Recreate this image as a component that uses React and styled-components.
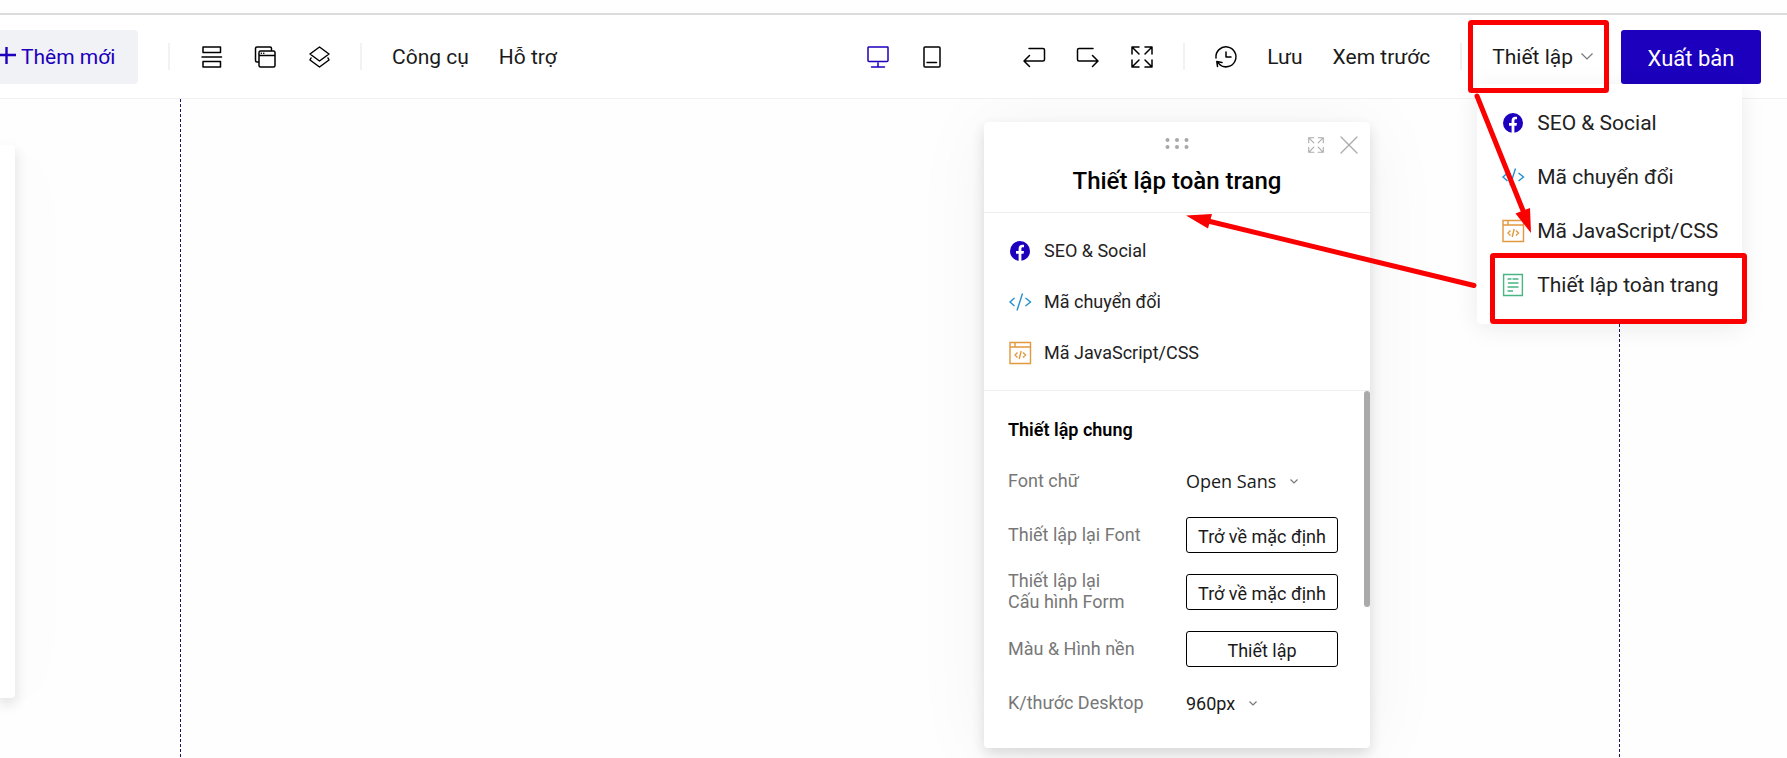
import React from "react";
import styled, { createGlobalStyle } from "styled-components";

const BLUE = "#1c00bd";
const RED = "#fb0000";

const GlobalStyle = createGlobalStyle`
  *, *::before, *::after { box-sizing: border-box; }
  body { margin: 0; background: #fefefe; color: #1a1a1a; font-family: Roboto, "Liberation Sans", sans-serif; }
  button, select { font: inherit; color: inherit; background: none; border: 0; padding: 0; cursor: pointer; }
  h2, h3, ul { margin: 0; padding: 0; }
`;

const Page = styled.div`
  position: relative;
  display: flex;
  flex-direction: column;
  min-height: 100vh;
  overflow: hidden;
`;

const Toolbar = styled.header`
  position: relative;
  z-index: 2;
  display: flex;
  align-items: center;
  margin-top: 13px;
  padding-right: 26px;
  border-top: 2px solid #dcdcdc;
  border-bottom: 1px solid #f0f0f0;
  background: #fff;
  box-sizing: content-box;
  height: 83px;
  font-size: 21px;
  line-height: 24px;
`;

const Group = styled.div`
  display: flex;
  align-items: center;
  gap: ${(p) => p.$gap}px;
`;

const Spacer = styled.div`
  flex: 1;
`;

const AddButton = styled.button`
  display: flex;
  align-items: center;
  gap: 5px;
  width: 138px;
  height: 54px;
  border-radius: 0 4px 4px 0;
  background: #f1f2f5;
  color: ${BLUE};
  white-space: nowrap;
`;

const IconButton = styled.button`
  display: flex;
  width: 22px;
  height: 22px;
  color: ${(p) => (p.$active ? BLUE : "#000")};
`;

const TextButton = styled.button`
  white-space: nowrap;
`;

const Divider = styled.span`
  width: 2px;
  height: 27px;
  margin: 0 30px;
  background: #f2f2f2;
`;

const Devices = styled(Group)`
  margin-right: 80px;
`;

const Settings = styled.div`
  position: relative;
  display: flex;
  align-items: center;
  height: 54px;
  margin-right: 28px;
`;

const SettingsButton = styled(TextButton)`
  display: flex;
  align-items: center;
  gap: 8px;
`;

const PublishButton = styled.button`
  width: 140px;
  height: 54px;
  padding-top: 4px;
  border-radius: 3px;
  background: ${BLUE};
  color: #fff;
  font-size: 22px;
`;

const Menu = styled.ul`
  position: absolute;
  top: 100%;
  left: -15px;
  width: 265px;
  padding: 12px 0;
  list-style: none;
  border-radius: 4px;
  background: #fff;
  box-shadow: 0 4px 24px rgba(0, 0, 0, 0.08);
`;

const MenuItem = styled.button`
  display: flex;
  align-items: center;
  gap: 14px;
  width: 100%;
  height: ${(p) => (p.$compact ? 51 : 54)}px;
  padding-left: 26px;
  font-size: ${(p) => (p.$compact ? 18 : 21)}px;
  white-space: nowrap;
  color: #222;
`;

const Canvas = styled.main`
  position: relative;
  flex: 1;
  display: flex;
  padding: 0 167px 0 180px;
`;

const PageArea = styled.section`
  flex: 1;
  display: flex;
  justify-content: space-between;
`;

const Guide = styled.div`
  width: 1px;
  background: repeating-linear-gradient(#22105f 0 3px, transparent 3px 5px);
`;

const floatShadow = "0 6px 14px rgba(0, 0, 0, 0.13), 0 4px 80px rgba(0, 0, 0, 0.05)";

const SidePanel = styled.aside`
  position: absolute;
  left: 0;
  top: 46px;
  width: 15px;
  height: 553px;
  border-radius: 0 4px 4px 0;
  background: #fff;
  box-shadow: ${floatShadow};
`;

const Panel = styled.aside`
  position: absolute;
  top: 23px;
  right: 417px;
  width: 386px;
  border-radius: 4px;
  background: #fff;
  box-shadow: ${floatShadow};
  font-size: 18px;
`;

const PanelHeader = styled.div`
  display: grid;
  grid-template-columns: 1fr auto 1fr;
  grid-template-rows: 28px 32px;
  padding: 15px 13px 0;
  height: 91px;
  border-bottom: 1px solid #eee;
`;

const DragHandle = styled.svg`
  grid-column: 2;
`;

const PanelActions = styled.div`
  display: flex;
  justify-content: flex-end;
  gap: 17px;
  color: #aaa;
`;

const SmallButton = styled.button`
  display: flex;
  width: 16px;
  height: 16px;
`;

const PanelTitle = styled.h2`
  grid-column: 1 / -1;
  font-size: 24px;
  font-weight: 500;
  line-height: 32px;
  text-align: center;
  color: #000;
`;

const PanelLinks = styled.ul`
  padding: 12px 0;
  list-style: none;
  border-bottom: 1px solid #eee;
`;

const PanelBody = styled.div`
  position: relative;
  display: flex;
  flex-direction: column;
  gap: 21px;
  padding: 28px 32px 30px 24px;
`;

const ScrollThumb = styled.span`
  position: absolute;
  top: 0;
  right: 0;
  width: 6px;
  height: 216px;
  border-radius: 3px;
  background: #aaa;
`;

const SectionTitle = styled.h3`
  padding-bottom: 4px;
  font-size: 18px;
  font-weight: 600;
  line-height: 22px;
  color: #000;
`;

const Row = styled.div`
  display: grid;
  grid-template-columns: 178px 1fr;
  align-items: center;
  align-content: center;
  height: ${(p) => (p.$tall ? 36 : 30)}px;
`;

const Label = styled.label`
  padding-bottom: 2px;
  line-height: 21px;
  color: #777;
  white-space: pre-line;
`;

const OutlineButton = styled.button`
  height: 36px;
  padding-top: 3px;
  border: 1px solid #000;
  border-radius: 3px;
  white-space: nowrap;
`;

const SelectBox = styled.span`
  display: flex;
  align-items: center;
  gap: 14px;
`;

const Select = styled.select`
  appearance: none;
  field-sizing: content;
  outline: none;
  font-family: ${(p) => p.$font || "inherit"};
`;

const Annotations = styled.svg`
  position: absolute;
  z-index: 3;
  top: 0;
  right: 0;
  pointer-events: none;
`;

function Icon({ size = 22, width = 1.5, children }) {
  return (
    <svg width={size} height={size} viewBox="0 0 22 22" fill="none" stroke="currentColor" strokeWidth={width} strokeLinecap="round" strokeLinejoin="round" overflow="visible" aria-hidden="true">
      {children}
    </svg>
  );
}

const expandPath = "M1 8V1H8M1 1L8 8M14 1H21V8M21 1L14 8M1 14V21H8M1 21L8 14M14 21H21V14M21 21L14 14";

const Chevron = ({ w, h }) => (
  <svg width={w} height={h} viewBox={`0 0 ${w} ${h}`} fill="none" stroke="#777" strokeWidth="1.2" aria-hidden="true">
    <path d={`M.5 .5L${w / 2} ${h - 1}L${w - 0.5} .5`} />
  </svg>
);

const FacebookIcon = () => (
  <svg width="20" height="20" viewBox="0 0 20 20" aria-hidden="true">
    <circle cx="10" cy="10" r="10" fill={BLUE} />
    <path fill="#fff" d="M8.6 20V12.8H6V10H8.6V7.8C8.6 5.2 10.1 3.8 12.4 3.8C13.2 3.8 14 3.9 14 3.9V6.3H12.8C11.7 6.3 11.4 7 11.4 7.8V10H14L13.5 12.8H11.4V20Z" />
  </svg>
);

const CodeIcon = () => (
  <svg width="20" height="20" viewBox="0 0 20 20" fill="none" stroke="#2490d0" strokeWidth="1.4" overflow="visible" aria-hidden="true">
    <path d="M4.5 6L0 10L4.5 14M15.500 6L20.500 10L15.500 14M12.500 1.500L7 18.500" />
  </svg>
);

const ScriptIcon = () => (
  <svg width="20" height="20" viewBox="0 0 20 20" fill="none" stroke="#e1983f" strokeWidth="1.4" overflow="visible" aria-hidden="true">
    <path d="M0 -.5H20.5V20.5H0ZM0 4H20.5M5 -.5V4M7.5 9.5L5 12L7.5 14.5M13 9.5L15.5 12L13 14.5M11.2 8L9.2 16" />
  </svg>
);

const DocumentIcon = () => (
  <svg width="20" height="20" viewBox="0 0 20 20" fill="none" stroke="#48b583" strokeWidth="1.4" overflow="visible" aria-hidden="true">
    <path d="M.6 -.5H19.4V20.5H.6ZM4.500 4H8.500M9.500 4H15.500M5 8H15.500M4.500 12H15.500M4.500 16H10" />
  </svg>
);

const links = [
  { label: "SEO & Social", icon: FacebookIcon },
  { label: "Mã chuyển đổi", icon: CodeIcon },
  { label: "Mã JavaScript/CSS", icon: ScriptIcon },
];

function MenuItems({ items, compact }) {
  return items.map(({ label, icon: Glyph }) => (
    <li key={label}>
      <MenuItem type="button" $compact={compact}>
        <Glyph />
        {label}
      </MenuItem>
    </li>
  ));
}

export default function App() {
  return (
    <Page>
      <GlobalStyle />
      <Toolbar>
        <AddButton type="button">
          <svg width="16" height="20" viewBox="0 0 16 20" stroke="currentColor" strokeWidth="2.4" aria-hidden="true">
            <path d="M-2 8H16M6.5 -1V17" />
          </svg>
          Thêm mới
        </AddButton>
        <Divider />
        <Group $gap={32}>
          <IconButton type="button" aria-label="Section">
            <Icon>
              <path d="M3 1H20.500V6.5H3ZM3 15.500H20.500V21H3ZM2 11H21.500" />
            </Icon>
          </IconButton>
          <IconButton type="button" aria-label="Popup">
            <Icon>
              <path d="M4.5 16H3Q1.5 16 1.5 14.5V2.5Q1.5 1 3 1H16Q17.5 1 17.5 2.5V4M6.5 5H19.5Q21 5 21 6.5V19.5Q21 21 19.5 21H6.5Q5 21 5 19.5V6.5Q5 5 6.5 5ZM5 9.5H21M7.3 7.3H7.4M9.7 7.3H9.8" />
            </Icon>
          </IconButton>
          <IconButton type="button" aria-label="Layer">
            <Icon>
              <path d="M11.500 1L21 8L11.500 15L2 8ZM3 12L2 14L11.500 21L21 14L20 12" />
            </Icon>
          </IconButton>
        </Group>
        <Divider />
        <Group $gap={30}>
          <TextButton type="button">Công cụ</TextButton>
          <TextButton type="button">Hỗ trợ</TextButton>
        </Group>
        <Spacer />
        <Devices $gap={32}>
          <IconButton type="button" $active aria-label="Desktop">
            <Icon>
              <path d="M1.5 1H20.5Q21 1 21 1.5V14.5Q21 15.5 20 15.5H2Q1 15.5 1 14.5V1.5ZM11 17V20.5M4.5 21H17.5" />
            </Icon>
          </IconButton>
          <IconButton type="button" aria-label="Mobile">
            <Icon>
              <path d="M4 1H18Q19 1 19 2V20Q19 21 18 21H4Q3 21 3 20V2Q3 1 4 1ZM6 16.5H15.5" />
            </Icon>
          </IconButton>
        </Devices>
        <Group $gap={32}>
          <IconButton type="button" aria-label="Undo">
            <Icon>
              <path d="M6 2.5H20Q21.5 2.5 21.5 4V13.5Q21.5 15 20 15H1M6.5 9.5L1 15L6.5 20.5" />
            </Icon>
          </IconButton>
          <IconButton type="button" aria-label="Redo">
            <Icon>
              <path d="M16 2.5H2Q.5 2.5 .5 4V13.5Q.5 15 2 15H21M15.5 9.5L21 15L15.5 20.5" />
            </Icon>
          </IconButton>
          <IconButton type="button" aria-label="Fullscreen">
            <Icon>
              <path d={expandPath} />
            </Icon>
          </IconButton>
        </Group>
        <Divider />
        <Group $gap={30}>
          <IconButton type="button" aria-label="History">
            <Icon>
              <path d="M1 12A10 10 0 1 1 4.5 18.5M11 6V11H16M2.5 20.5L1.8 15.5L7 16.5M2 16L6 19.5" />
            </Icon>
          </IconButton>
          <TextButton type="button">Lưu</TextButton>
          <TextButton type="button">Xem trước</TextButton>
        </Group>
        <Divider />
        <Settings>
          <SettingsButton type="button" aria-expanded="true">
            Thiết lập
            <Chevron w={12} h={7} />
          </SettingsButton>
          <Menu>
            <MenuItems items={[...links, { label: "Thiết lập toàn trang", icon: DocumentIcon }]} />
          </Menu>
        </Settings>
        <PublishButton type="button">Xuất bản</PublishButton>
      </Toolbar>

      <Canvas>
        <SidePanel />
        <PageArea>
          <Guide />
          <Guide />
        </PageArea>
        <Panel>
          <PanelHeader>
            <DragHandle width="24" height="12" viewBox="0 0 24 12" fill="#a8a8a8" aria-hidden="true">
              {[2.5, 12, 21.5].map((x) => (
                <g key={x}>
                  <circle cx={x} cy="3" r="2" />
                  <circle cx={x} cy="10" r="2" />
                </g>
              ))}
            </DragHandle>
            <PanelActions>
              <SmallButton type="button" aria-label="Mở rộng">
                <Icon size={16}>
                  <path d={expandPath} />
                </Icon>
              </SmallButton>
              <SmallButton type="button" aria-label="Đóng">
                <Icon size={16} width={1.8}>
                  <path d="M0 0L22 22M22 0L0 22" />
                </Icon>
              </SmallButton>
            </PanelActions>
            <PanelTitle>Thiết lập toàn trang</PanelTitle>
          </PanelHeader>
          <PanelLinks>
            <MenuItems items={links} compact />
          </PanelLinks>
          <PanelBody>
            <ScrollThumb />
            <SectionTitle>Thiết lập chung</SectionTitle>
            <Row>
              <Label htmlFor="font">Font chữ</Label>
              <SelectBox>
                <Select id="font" $font={'"Open Sans", sans-serif'}>
                  <option>Open Sans</option>
                </Select>
                <Chevron w={8} h={5} />
              </SelectBox>
            </Row>
            <Row $tall>
              <Label htmlFor="reset-font">Thiết lập lại Font</Label>
              <OutlineButton id="reset-font" type="button">Trở về mặc định</OutlineButton>
            </Row>
            <Row $tall>
              <Label htmlFor="reset-form">{"Thiết lập lại\nCấu hình Form"}</Label>
              <OutlineButton id="reset-form" type="button">Trở về mặc định</OutlineButton>
            </Row>
            <Row $tall>
              <Label htmlFor="background">Màu & Hình nền</Label>
              <OutlineButton id="background" type="button">Thiết lập</OutlineButton>
            </Row>
            <Row>
              <Label htmlFor="desktop-size">K/thước Desktop</Label>
              <SelectBox>
                <Select id="desktop-size">
                  <option>960px</option>
                </Select>
                <Chevron w={8} h={5} />
              </SelectBox>
            </Row>
          </PanelBody>
        </Panel>
      </Canvas>

      <Annotations width="607" height="330" viewBox="1180 0 607 330" fill="none" stroke={RED} strokeWidth="5" strokeLinecap="round" aria-hidden="true">
        <rect x="1470.5" y="22.5" width="136" height="68" rx="1" />
        <rect x="1492.5" y="255.5" width="252" height="66" rx="1" />
        <path d="M1477 96L1524 213M1474 285.500L1208 221" />
        <path fill={RED} stroke="none" d="M1531 233L1515.500 213.500L1530 208ZM1186 215.500L1212 214L1208 228.500Z" />
      </Annotations>
    </Page>
  );
}
